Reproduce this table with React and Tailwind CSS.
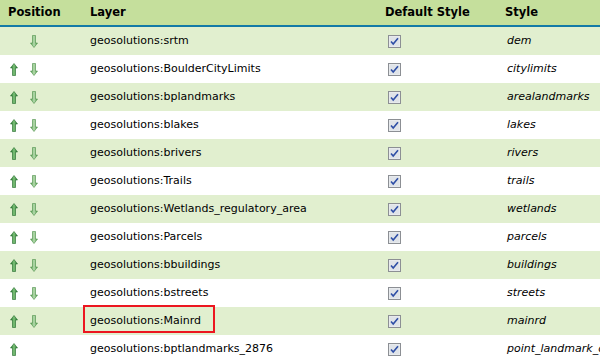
const rows = [
  { layer: "geosolutions:srtm", style: "dem", up: false, down: true },
  { layer: "geosolutions:BoulderCityLimits", style: "citylimits", up: true, down: true },
  { layer: "geosolutions:bplandmarks", style: "arealandmarks", up: true, down: true },
  { layer: "geosolutions:blakes", style: "lakes", up: true, down: true },
  { layer: "geosolutions:brivers", style: "rivers", up: true, down: true },
  { layer: "geosolutions:Trails", style: "trails", up: true, down: true },
  { layer: "geosolutions:Wetlands_regulatory_area", style: "wetlands", up: true, down: true },
  { layer: "geosolutions:Parcels", style: "parcels", up: true, down: true },
  { layer: "geosolutions:bbuildings", style: "buildings", up: true, down: true },
  { layer: "geosolutions:bstreets", style: "streets", up: true, down: true },
  { layer: "geosolutions:Mainrd", style: "mainrd", up: true, down: true, marked: true },
  { layer: "geosolutions:bptlandmarks_2876", style: "point_landmark_c", up: true, down: false },
];

function UpArrow() {
  return (
    <svg width="8" height="13" viewBox="0 0 8 13">
      <defs>
        <linearGradient id="upg" x1="0" x2="1" y1="0" y2="0">
          <stop offset="0" stopColor="#1f6e2a" />
          <stop offset="0.5" stopColor="#7fc47a" />
          <stop offset="1" stopColor="#1f6e2a" />
        </linearGradient>
      </defs>
      <path d="M4 0.5 L7.5 5 L5.5 5 L5.5 12.5 L2.5 12.5 L2.5 5 L0.5 5 Z" fill="url(#upg)" stroke="#236b2b" strokeWidth="0.6" />
    </svg>
  );
}

function DownArrow() {
  return (
    <svg width="8" height="13" viewBox="0 0 8 13">
      <defs>
        <linearGradient id="dng" x1="0" x2="1" y1="0" y2="0">
          <stop offset="0" stopColor="#4f9a4c" />
          <stop offset="0.5" stopColor="#b6dcae" />
          <stop offset="1" stopColor="#4f9a4c" />
        </linearGradient>
      </defs>
      <path d="M2.5 0.5 L5.5 0.5 L5.5 8 L7.5 8 L4 12.5 L0.5 8 L2.5 8 Z" fill="url(#dng)" stroke="#4c8f48" strokeWidth="0.6" />
    </svg>
  );
}

function Check() {
  return (
    <svg width="13" height="13" viewBox="0 0 13 13">
      <rect x="0.5" y="0.5" width="12" height="12" fill="#eef0f2" stroke="#8c8f94" />
      <rect x="1.5" y="1.5" width="10" height="10" fill="#dfe3e8" />
      <path d="M3 6.5 L5.2 9 L10 3.2" fill="none" stroke="#2f4fa6" strokeWidth="1.6" />
    </svg>
  );
}

export default function App() {
  return (
    <div className="h-[360px] w-[600px] overflow-hidden bg-white font-['DejaVu_Sans',sans-serif] text-[11px] text-black">
      <div className="grid h-[25px] grid-cols-[82px_295px_120px_1fr] items-center bg-[#c5df9c] font-bold text-[11.5px]">
        <div className="pl-[8px]">Position</div>
        <div className="pl-[8px]">Layer</div>
        <div className="pl-[8px]">Default Style</div>
        <div className="pl-[8px]">Style</div>
      </div>
      <div className="h-[2px] bg-[#137aa6]" />
      {rows.map((r, i) => (
        <div
          key={r.layer}
          className={`grid h-[28px] grid-cols-[82px_295px_120px_1fr] items-center ${i % 2 === 0 ? "bg-[#e1efcf]" : "bg-white"}`}
        >
          <div className="flex items-center">
            <span className="ml-[10px] flex w-[8px]">{r.up && <UpArrow />}</span>
            <span className="ml-[12px] flex w-[8px]">{r.down && <DownArrow />}</span>
          </div>
          <div className="relative h-full">
            <div className="flex h-full items-center pl-[8px]">{r.layer}</div>
            {r.marked && (
              <div className="absolute left-[1px] top-[-2px] h-[28px] w-[132px] border-2 border-[#ec1620]" />
            )}
          </div>
          <div className="flex pl-[11px]">
            <Check />
          </div>
          <div className="whitespace-nowrap pl-[10px] italic">{r.style}</div>
        </div>
      ))}
    </div>
  );
}
